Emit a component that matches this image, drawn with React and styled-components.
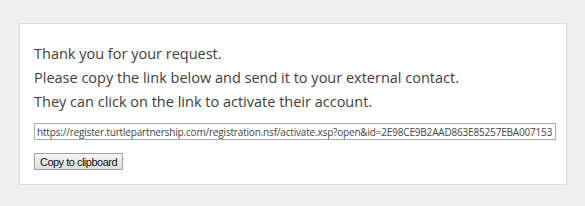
import React from "react";
import styled, { createGlobalStyle } from "styled-components";

const Global = createGlobalStyle`
  html, body { margin: 0; padding: 0; background: #efefef; }
  body { font-family: "Open Sans", "DejaVu Sans", sans-serif; }
`;

const Page = styled.div`
  padding: 23px 0 0 19px;
`;

const Panel = styled.div`
  box-sizing: border-box;
  width: 548px;
  height: 162px;
  background: #fff;
  border: 1px solid #dcdcdc;
  padding: 18px 10px 0 14px;
`;

const Message = styled.p`
  margin: 0;
  font-size: 14.5px;
  line-height: 24px;
  color: #404040;
`;

const LinkField = styled.input`
  box-sizing: border-box;
  display: block;
  margin-top: 9px;
  width: 522px;
  height: 17px;
  padding: 0 1px 0 2px;
  border: 1px solid #a9a9a9;
  border-radius: 0;
  font-family: "Open Sans", sans-serif;
  font-size: 10px;
  letter-spacing: -0.18px;
  color: #444;
  background: #fff;
  outline: none;
`;

const CopyButton = styled.button`
  box-sizing: border-box;
  display: block;
  margin-top: 13px;
  height: 17px;
  width: 89px;
  padding: 0;
  border: 1px solid #a0a0a0;
  border-radius: 0;
  background: linear-gradient(#f6f6f6, #dedede);
  font-family: "Liberation Sans", Arial, sans-serif;
  font-size: 11px;
  letter-spacing: -0.5px;
  color: #111;
`;

export default function App() {
  return (
    <>
      <Global />
      <Page>
        <Panel>
          <Message>Thank you for your request.</Message>
          <Message>Please copy the link below and send it to your external contact.</Message>
          <Message>They can click on the link to activate their account.</Message>
          <LinkField
            readOnly
            value="https://register.turtlepartnership.com/registration.nsf/activate.xsp?open&id=2E98CE9B2AAD863E85257EBA007153"
          />
          <CopyButton>Copy to clipboard</CopyButton>
        </Panel>
      </Page>
    </>
  );
}
